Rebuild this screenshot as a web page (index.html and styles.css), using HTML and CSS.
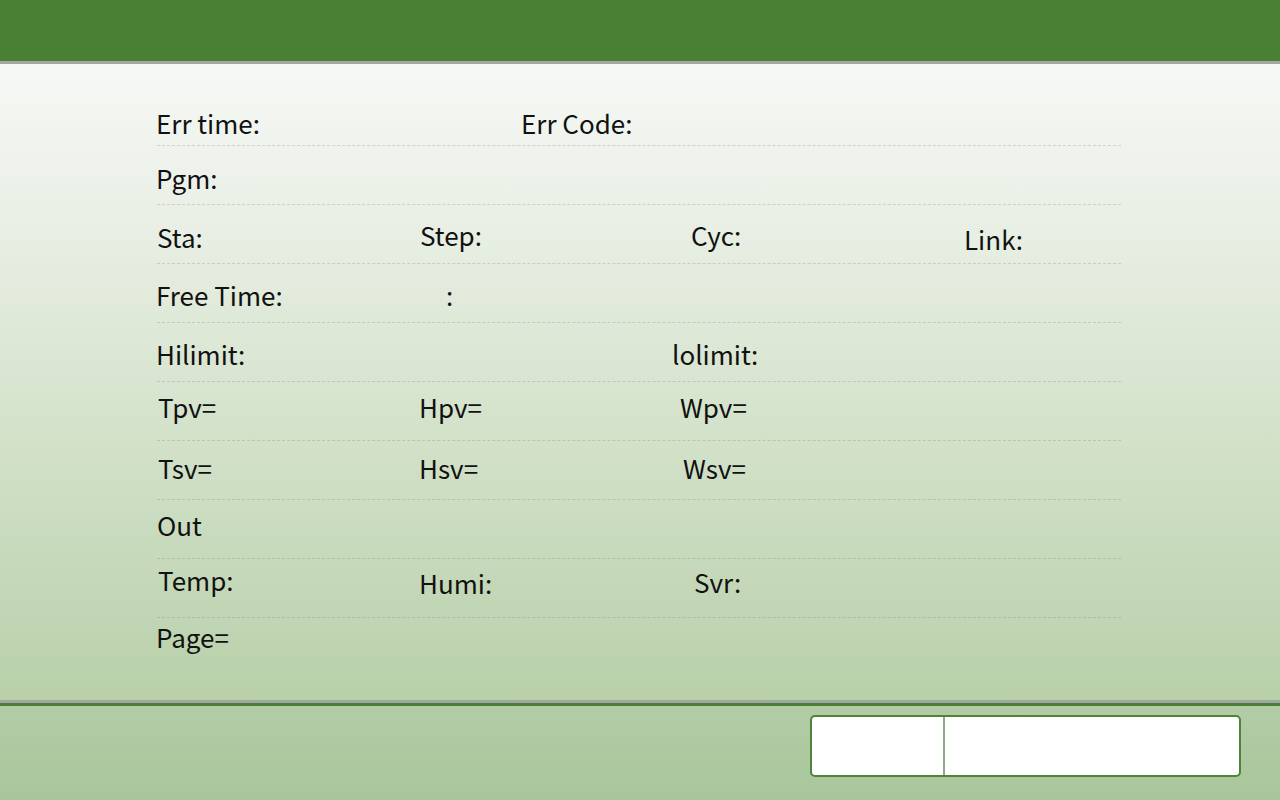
FILE: index.html
```html
<!DOCTYPE html>
<html>
<head>
<meta charset="utf-8">
<link rel="stylesheet" href="styles.css">
</head>
<body>
<div class="screen">
  <header class="topbar"></header>
  <main class="panel">
    <div class="rows">
      <div class="row r1"><span>Err time:</span><span>Err Code:</span></div>
      <div class="row r2"><span>Pgm:</span></div>
      <div class="row r3"><span class="px1 dn2">Sta:</span><span>Step:</span><span>Cyc:</span><span class="dn4">Link:</span></div>
      <div class="row r4"><span>Free Time:</span><span>:</span></div>
      <div class="row r5"><span>Hilimit:</span><span>lolimit:</span></div>
      <div class="row r6"><span class="px2">Tpv=</span><span>Hpv=</span><span>Wpv=</span></div>
      <div class="row r7"><span class="px2">Tsv=</span><span>Hsv=</span><span>Wsv=</span></div>
      <div class="row r8"><span class="px1">Out</span></div>
      <div class="row r9"><span class="px2">Temp:</span><span class="dn3">Humi:</span><span class="dn2">Svr:</span></div>
      <div class="row r10"><span>Page=</span></div>
    </div>
  </main>
  <footer class="bottombar">
    <div class="status">
      <div class="status-a"></div>
      <div class="status-b"></div>
    </div>
  </footer>
</div>
</body>
</html>
```
FILE: styles.css
```css
html, body {
  margin: 0;
  padding: 0;
}
body {
  width: 1280px;
  height: 800px;
  overflow: hidden;
  font-family: "Noto Sans CJK SC", "Noto Sans", sans-serif;
  color: #111;
}
.screen {
  display: flex;
  flex-direction: column;
  height: 800px;
}
.topbar {
  height: 61px;
  background: #4a8034;
  border-bottom: 3px solid #a3a6a2;
  flex: none;
}
.panel {
  height: 636px;
  flex: none;
  background: linear-gradient(180deg, #f6f8f5 0%, #e9efe5 25%, #d5e3cc 55%, #b8d0aa 100%);
  padding-top: 23px;
  box-sizing: border-box;
}
.rows {
  margin-left: 157px;
  width: 964px;
}
.row {
  display: grid;
  height: 59px;
  box-sizing: border-box;
  border-bottom: 1px dashed rgba(120, 130, 115, 0.28);
  font-size: 26px;
  line-height: 26px;
  align-items: start;
}
.row span {
  white-space: nowrap;
  margin-left: -1px;
}
.r1 { grid-template-columns: 365px auto; padding-top: 23px; }
.r2 { padding-top: 19px; }
.r3 { grid-template-columns: 264px 271px 273px auto; padding-top: 17px; }
.r4 { grid-template-columns: 290px auto; padding-top: 18px; }
.r5 { grid-template-columns: 516px auto; padding-top: 18px; }
.r6 { grid-template-columns: 263px 261px auto; padding-top: 12px; }
.r7 { grid-template-columns: 263px 264px auto; padding-top: 14px; }
.r8 { padding-top: 12px; }
.r9 { grid-template-columns: 263px 275px auto; padding-top: 8px; }
.r10 { padding-top: 6px; border-bottom: none; }
.px1 { padding-left: 1px; }
.px2 { padding-left: 2px; }
.dn2 { margin-top: 2px; }
.dn3 { margin-top: 3px; }
.dn4 { margin-top: 4px; }
.bottombar {
  flex: 1;
  border-top: 3px solid #a3a6a2;
  box-shadow: inset 0 3px 0 #4a8034;
  background: linear-gradient(180deg, #b3cca6 0%, #a9c69b 100%);
  padding: 12px 0 0 810px;
  box-sizing: border-box;
}
.status {
  width: 431px;
  height: 62px;
  box-sizing: border-box;
  border: 2px solid #4f8438;
  border-radius: 5px;
  background: #fff;
  display: flex;
}
.status-a {
  width: 131px;
  border-right: 2px solid #8fa88b;
}
.status-b {
  flex: 1;
}
```
